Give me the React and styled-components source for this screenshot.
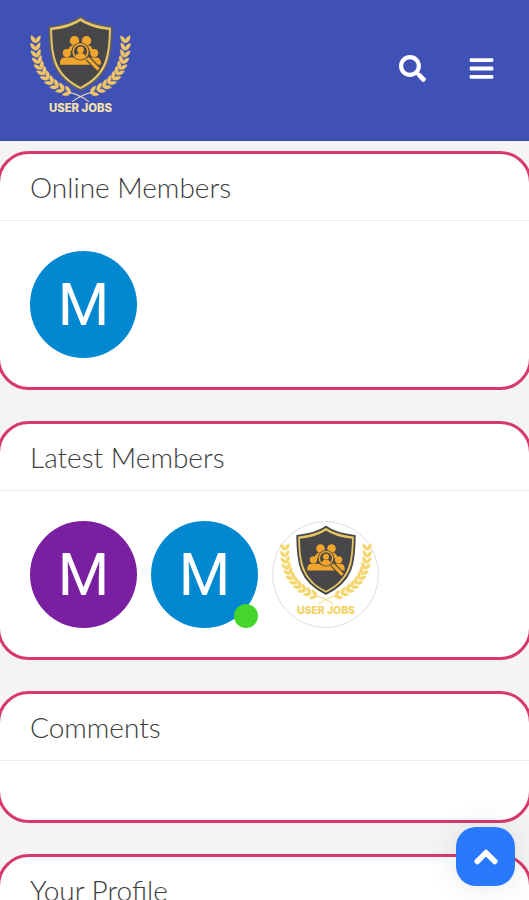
import React from 'react';
import styled, { createGlobalStyle } from 'styled-components';
import { FaSearch, FaBars, FaChevronUp } from 'react-icons/fa';

// leaf positions along one laurel branch, bottom to top
const leaves = Array.from({ length: 11 }, (_, i) => {
    const t = 0.06 + i * 0.09;
    const u = 1 - t;
    const x = u * u * 160 + 2 * u * t * 38 + t * t * 46;
    const y = u * u * 254 + 2 * u * t * 218 + t * t * 86;
    const dx = 2 * u * (38 - 160) + 2 * t * (46 - 38);
    const dy = 2 * u * (218 - 254) + 2 * t * (86 - 218);
    return { x, y, angle: (Math.atan2(dy, dx) * 180) / Math.PI };
});

function Branch({ color }) {
    return (
        <g fill={color} stroke={color} strokeWidth="1">
            {leaves.map(({ x, y, angle }) => (
                <g key={angle} transform={`translate(${x} ${y}) rotate(${angle})`}>
                    <path d="M-5 0C-3 -10 7 -16 17 -14C14 -5 6 2 -5 0Z" />
                    <path d="M-5 0C-3 10 7 16 17 14C14 5 6 -2 -5 0Z" />
                </g>
            ))}
        </g>
    );
}

function Logo({ width, leaf, text, outline }) {
    return (
        <svg width={width} viewBox="20 15 320 305" role="img" aria-label="User Jobs">
            <Branch color={leaf} />
            <g transform="translate(360 0) scale(-1 1)">
                <Branch color={leaf} />
            </g>
            <path d="M146 250Q172 254 205 277M214 250Q188 254 155 277" fill="none" stroke={text} strokeWidth="3" />
            <path
                d="M180 24C155 42 120 50 86 54C87 140 92 200 180 243C268 200 273 140 274 54C240 50 205 42 180 24Z"
                fill="#e8c763"
                stroke={outline}
                strokeWidth="6"
            />
            <path
                d="M180 36C155 52 125 60 95 63C97 142 105 194 180 233C255 194 263 142 265 63C235 60 205 52 180 36Z"
                fill="#474749"
            />
            <g fill="#f2a52c">
                <circle cx="162" cy="95" r="14" />
                <circle cx="198" cy="95" r="14" />
                <path d="M143 126Q145 108 162 108H198Q215 108 217 126Z" />
                <circle cx="139" cy="132" r="12" />
                <circle cx="221" cy="132" r="12" />
                <path d="M119 167V159Q120 145 134 145H226Q240 145 241 159V167Z" />
            </g>
            <path d="M201 147L235 182" stroke="#474749" strokeWidth="17" />
            <path d="M201 147L234 181" stroke="#f2a52c" strokeWidth="10" />
            <circle cx="180" cy="127" r="27" fill="#474749" />
            <circle cx="180" cy="127" r="22" fill="#474749" stroke="#f2a52c" strokeWidth="5" />
            <circle cx="180" cy="122" r="10" fill="#f2a52c" />
            <path d="M165 143Q167 132 180 132Q193 132 195 143Q180 151 165 143Z" fill="#f2a52c" />
            <LogoText x="180" y="308" fill={text}>USER JOBS</LogoText>
        </svg>
    );
}

const sections = [
    { title: 'Online Members', members: [{ id: 1, letter: 'M', color: '#0288d1' }] },
    {
        title: 'Latest Members',
        members: [
            { id: 2, letter: 'M', color: '#7b1fa2' },
            { id: 1, letter: 'M', color: '#0288d1', online: true },
            { id: 3, logo: true },
        ],
    },
    { title: 'Comments', members: [] },
    { title: 'Your Profile', members: [] },
];

export default function App() {
    return (
        <>
            <GlobalStyle />
            <Header>
                <Brand href="#">
                    <Logo width={107} leaf="#f3c665" text="#f5e3ae" outline="#5a5a70" />
                </Brand>
                <Actions>
                    <IconButton type="button" aria-label="Search"><FaSearch /></IconButton>
                    <IconButton type="button" aria-label="Menu"><FaBars /></IconButton>
                </Actions>
            </Header>
            <Main>
                {sections.map(({ title, members }) => (
                    <Card key={title}>
                        <CardTitle>{title}</CardTitle>
                        <CardBody>
                            {members.map((member) => (
                                <Avatar key={member.id} href="#" $color={member.color}>
                                    {member.logo
                                        ? <Logo width={98} leaf="#f5d66c" text="#f3d264" outline="#474749" />
                                        : member.letter}
                                    {member.online && <OnlineDot />}
                                </Avatar>
                            ))}
                        </CardBody>
                    </Card>
                ))}
            </Main>
            <ScrollTop type="button" aria-label="Back to top" onClick={() => window.scrollTo(0, 0)}>
                <FaChevronUp />
            </ScrollTop>
        </>
    );
}

const GlobalStyle = createGlobalStyle`
    * {
        box-sizing: border-box;
    }

    html {
        scrollbar-width: none;
    }

    body {
        margin: 0;
        background-color: #f4f4f4;
        overflow-x: hidden;
        font-family: Lato, "Open Sans", sans-serif;
    }
`;

const Header = styled.header`
    display: flex;
    align-items: center;
    justify-content: space-between;
    padding: 14px 34px 24px 27px;
    background-color: #3f51b5;
    border-bottom: 1px solid #3a4aa5;
`;

const Brand = styled.a`
    display: flex;
`;

const LogoText = styled.text`
    font-family: Inter, sans-serif;
    font-size: 34px;
    font-weight: 800;
    text-anchor: middle;
`;

const Actions = styled.div`
    display: flex;
    gap: 42px;
    padding-top: 7px;
`;

const IconButton = styled.button`
    display: flex;
    padding: 0;
    border: none;
    background: none;
    color: white;
    font-size: 27px;
    cursor: pointer;
`;

const Main = styled.main`
    display: flex;
    flex-direction: column;
    gap: 31px;
    margin: 0 -3px;
    padding: 10px 0 31px;
`;

const Card = styled.section`
    border: 3px solid #d63a6c;
    border-radius: 32px;
    background-color: white;
`;

const CardTitle = styled.h2`
    margin: 0;
    padding: 16px 30px;
    border-bottom: 1px solid #ececec;
    color: #3c3c3c;
    font-size: 28px;
    font-weight: 300;
    line-height: 34px;
`;

const CardBody = styled.div`
    display: flex;
    flex-wrap: wrap;
    gap: 14px;
    padding: 30px 30px 29px;
`;

const Avatar = styled.a`
    position: relative;
    display: flex;
    align-items: center;
    justify-content: center;
    width: 107px;
    height: 107px;
    padding-bottom: ${({ $color }) => ($color ? 0 : '7px')};
    border: ${({ $color }) => ($color ? 'none' : '1px solid #dedede')};
    border-radius: 50%;
    background-color: ${({ $color }) => $color || 'white'};
    color: white;
    font-family: Roboto, sans-serif;
    font-size: 59px;
    text-decoration: none;
`;

const OnlineDot = styled.span`
    position: absolute;
    right: 0;
    bottom: 0;
    width: 24px;
    height: 24px;
    border-radius: 50%;
    background-color: #44d62c;
`;

const ScrollTop = styled.button`
    position: fixed;
    right: 14px;
    bottom: 14px;
    display: flex;
    align-items: center;
    justify-content: center;
    width: 59px;
    height: 59px;
    padding: 0;
    border: none;
    border-radius: 20px;
    background-color: #2979ff;
    box-shadow: 0 0 30px rgba(0, 0, 0, 0.1);
    color: white;
    font-size: 26px;
    cursor: pointer;

    svg {
        stroke: white;
        stroke-width: 28px;
    }
`;
